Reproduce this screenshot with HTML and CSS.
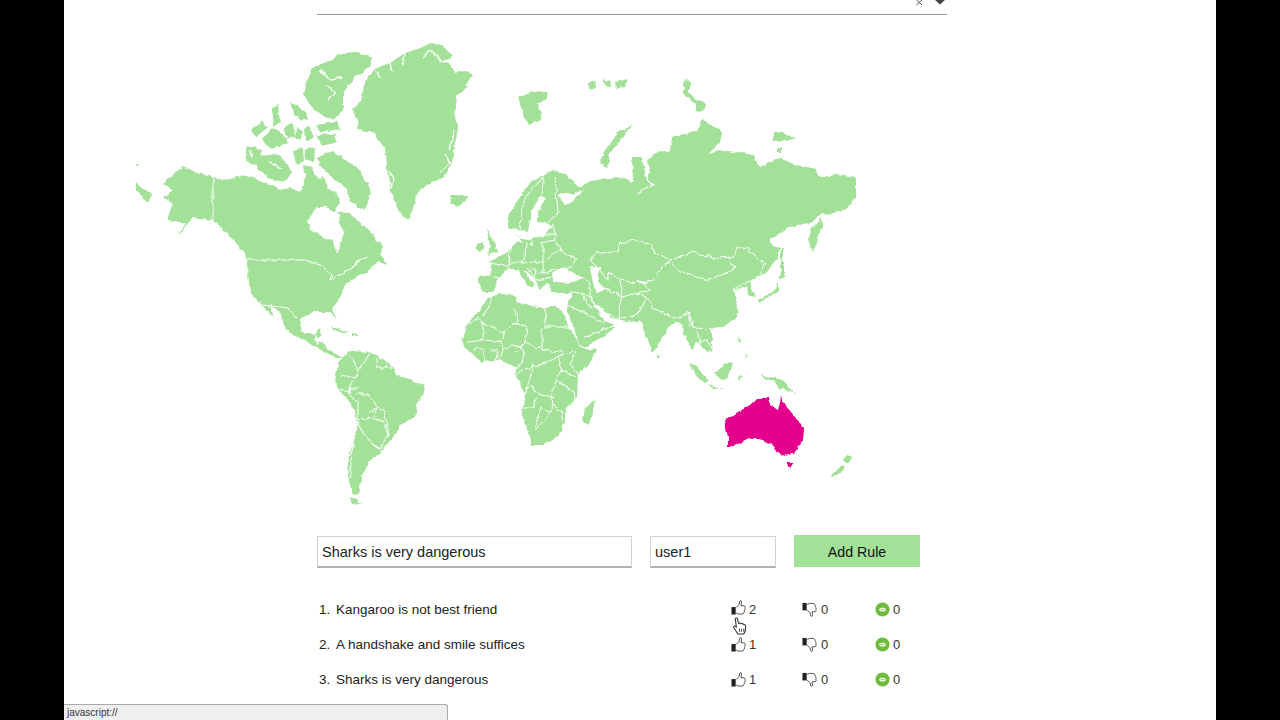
FILE: index.html
```html
<!DOCTYPE html>
<html lang="en">
<head>
<meta charset="utf-8">
<title>Rules</title>
<link rel="stylesheet" href="styles.css">
</head>
<body>
<div class="page">
  <div class="topbar">
    <svg class="topicons" viewBox="0 0 30 6" width="30" height="6" aria-hidden="true">
      <path class="x" d="M0.5 0 L6 5 M6 0 L0.5 5"/>
      <path class="diamond" d="M19 0 H29 L24 4.5 Z"/>
    </svg>
  </div>

  <svg class="map" viewBox="136 40 720 470" width="720" height="470" aria-label="World map">
    <defs>
      <filter id="rough" filterUnits="userSpaceOnUse" x="136" y="40" width="720" height="470" color-interpolation-filters="sRGB">
        <feTurbulence type="fractalNoise" baseFrequency="0.14" numOctaves="3" seed="7" result="n"/>
        <feDisplacementMap in="SourceGraphic" in2="n" scale="5" xChannelSelector="R" yChannelSelector="G"/>
        <feGaussianBlur stdDeviation="0.4"/>
      </filter>
    </defs>
    <g filter="url(#rough)">
    <g class="land">
      <!-- Greenland -->
      <polygon points="432,43 442,46 452,57 442,62 452,65 455,73 465,71 472,75 463,90 457,95 455,117 458,130 455,143 452,163 445,177 430,183 417,193 410,220 402,217 393,200 388,177 385,147 373,133 357,128 358,120 352,110 362,100 363,87 375,68 390,63 405,53 420,48"/>
      <!-- North America -->
      <polygon points="163,183 182,167 213,177 227,180 243,175 267,183 280,190 292,187 300,192 306,176 302,165 311,167 318,180 324,176 329,190 336,192 340,204 334,212 350,213 360,222 370,232 383,247 380,254 388,265 377,262 366,272 352,280 345,285 342,293 333,308 335,318 330,312 313,312 300,320 302,332 313,335 320,329 322,335 313,340 323,343 328,350 335,354 342,358 336,358 325,352 313,346 305,340 287,332 280,313 270,305 274,318 262,305 250,292 247,262 248,260 240,247 220,227 213,220 193,217 178,235 186,222 172,222 167,218 173,203 163,197 173,190"/>
      <!-- Arctic Canada -->
      <polygon points="342,53 357,52 373,58 370,67 357,75 343,93 343,110 333,120 323,115 313,110 303,93 308,78 313,68 330,60"/>
      <polygon points="248,145 262,150 257,165 245,162"/>
      <polygon points="258,156 280,154 292,173 284,182 267,178 257,167"/>
      <polygon points="317,158 333,150 347,161 360,171 371,193 364,211 350,202 346,187 333,179 322,168"/>
      <polygon points="252,130 262,120 267,128 256,137"/>
      <polygon points="262,140 272,128 284,136 290,143 270,148"/>
      <polygon points="272,118 276,110 282,122 274,126"/>
      <polygon points="289,102 297,104 306,118 296,116"/>
      <polygon points="300,108 306,112 308,120 300,120"/>
      <polygon points="316,125 337,121 340,129 320,132"/>
      <polygon points="316,135 335,134 337,142 322,146"/>
      <polygon points="294,150 303,148 304,161 297,165"/>
      <polygon points="306,149 315,147 314,163 305,160"/>
      <polygon points="304,128 311,127 313,139 305,141"/>
      <polygon points="284,127 293,124 295,136 287,138"/>
      <polygon points="272,107 278,105 279,112 272,114"/>
      <polygon points="296,128 302,130 301,140 295,138"/>
      <!-- Chukotka / Aleutian end -->
      <polygon points="136,182 143,190 153,193 148,202 136,192"/>
      <polygon points="136,165 139,165 139,167 136,167"/>
      <!-- Caribbean -->
      <polygon points="330,326 345,331 346,333 332,330"/>
      <polygon points="352,333 358,334 358,336 352,335"/>
      <!-- South America -->
      <polygon points="342,358 352,351 370,352 390,363 398,375 425,385 423,395 417,405 415,417 400,425 393,437 385,447 380,450 380,453 368,462 362,477 360,487 357,495 352,493 348,477 348,460 357,427 355,410 337,387 335,375"/>
      <polygon points="349,497 357,499 362,504 353,503"/>
      <!-- Africa -->
      <polygon points="488,298 502,293 515,295 517,302 537,307 560,307 570,330 582,348 597,350 588,365 578,375 577,397 567,408 565,423 558,437 543,445 533,445 528,433 522,410 525,395 515,373 515,367 500,360 482,362 468,352 463,343 465,327 477,313"/>
      <polygon points="595,399 593,413 588,425 583,422 585,408"/>
      <!-- Eurasia -->
      <polygon points="508,217 518,200 530,183 553,170 566,173 578,188 587,183 617,177 633,182 632,157 642,157 645,178 650,173 647,160 658,153 670,150 672,138 697,130 703,119 722,132 720,143 707,155 723,150 753,155 760,167 780,158 800,167 817,170 820,177 837,175 856,178 856,198 845,210 827,215 822,213 812,222 790,227 768,240 773,245 780,247 777,260 765,273 750,282 755,297 748,295 747,287 733,290 738,305 737,317 723,327 710,328 713,350 707,353 697,340 693,350 688,343 680,323 672,323 653,353 640,320 637,323 612,318 615,327 603,337 583,347 578,342 567,310 568,303 572,293 552,293 550,285 547,283 540,290 533,277 523,268 535,287 529,288 518,270 508,268 500,277 498,278 492,292 482,292 478,277 490,275 492,263 488,262 507,252 513,245 522,242 515,233 518,238 527,240 528,232 508,227"/>
      <!-- UK Ireland Iceland -->
      <polygon points="487,228 493,238 498,252 488,255 490,245"/>
      <polygon points="477,245 483,242 483,250 477,251"/>
      <polygon points="450,195 467,195 467,200 457,207 451,202"/>
      <!-- Arctic Eurasia -->
      <polygon points="518,97 533,92 548,92 547,98 537,105 543,118 528,125 522,110"/>
      <polygon points="588,84 596,81 595,88 589,90"/>
      <polygon points="604,80 612,81 611,87 605,86"/>
      <polygon points="615,82 627,79 625,85 616,88"/>
      <polygon points="633,125 617,133 605,150 600,163 608,168 610,153 620,140"/>
      <polygon points="685,78 690,83 688,92 697,100 705,103 705,110 697,113 695,104 683,93"/>
      <polygon points="772,133 783,133 797,140 785,140 773,142"/>
      <polygon points="778,148 782,148 782,152 778,152"/>
      <!-- Japan and Sakhalin -->
      <polygon points="822,218 822,228 813,252 808,240 810,230"/>
      <polygon points="781,248 783,248 783,265 785,277 778,280 781,268"/>
      <polygon points="778,283 778,292 768,298 758,303 758,300 773,292"/>
      <!-- South-East Asia -->
      <polygon points="657,355 659,355 660,359 657,359"/>
      <polygon points="688,363 695,365 708,380 705,383 697,377"/>
      <polygon points="708,385 723,389 713,389"/>
      <polygon points="730,362 733,363 728,378 720,380 715,372 725,365"/>
      <polygon points="737,377 742,375 738,382"/>
      <polygon points="738,337 740,343 737,343"/>
      <polygon points="745,355 748,356 745,360"/>
      <polygon points="760,375 770,377 783,380 795,393 783,388 780,390 775,382 767,380"/>
      <!-- New Zealand -->
      <polygon points="847,454 852,457 847,463 844,460"/>
      <polygon points="843,465 844,470 833,477 831,475"/>
    </g>

    <g class="water">
      <polygon points="307,222 317,207 327,207 340,215 343,237 337,253 332,240 312,232"/>
      <polygon points="527,240 543,237 553,224 538,222 540,207 547,197 540,196 531,212 528,232"/>
      <polygon points="558,193 572,194 582,190 574,201 566,205 562,200"/>
      <polygon points="552,273 563,267 573,273 582,278 573,283 553,282"/>
      <polygon points="590,267 600,267 597,277 603,290 597,293 593,283"/>
      <polygon points="593,305 605,322 617,325 610,315 598,305"/>
      <polygon points="530,243 534,240 532,246"/>
    </g>

    <g class="coast">
      <polyline points="442,62 430,50 424,58"/>
      <polyline points="405,53 403,66"/>
      <polyline points="390,63 392,72"/>
      <polyline points="375,68 380,78"/>
      <polyline points="388,170 394,178 391,188"/>
      <polyline points="445,155 450,163 440,172"/>
      <polyline points="455,130 449,150"/>
      <polyline points="320,70 330,80 342,78"/>
      <polyline points="325,85 335,92 328,100"/>
      <polyline points="637,193 648,188 653,185 647,180 648,167"/>
      <polyline points="345,272 358,262 370,256"/>
      <polyline points="250,150 252,158"/>
      <polyline points="270,162 282,170"/>
    </g>

    <g class="border">
      <polyline points="213,177 213,220"/>
      <polyline points="248,260 305,260 320,265 332,275 330,280 345,272"/>
      <polyline points="262,305 280,307 288,308 297,318"/>
      <polyline points="315,335 318,345"/>
      <polyline points="345,353 352,358 358,370 356,378 340,375"/>
      <polyline points="370,352 362,365 358,372"/>
      <polyline points="378,358 376,368 392,368"/>
      <polyline points="386,368 388,360"/>
      <polyline points="338,390 350,392 348,388 358,388"/>
      <polyline points="358,372 350,385 348,392 358,402 358,412 358,420 358,427"/>
      <polyline points="356,394 368,394 378,408 384,412 388,425 388,435"/>
      <polyline points="370,412 378,408 372,418 384,422 388,435 380,448 372,444 362,430 358,420 370,418"/>
      <polyline points="372,444 380,450"/>
      <polyline points="350,478 352,450 358,420"/>
      <polyline points="483,317 492,298"/>
      <polyline points="465,327 478,318 483,322 503,333 515,323 527,327"/>
      <polyline points="515,307 517,322"/>
      <polyline points="545,307 545,327 570,327"/>
      <polyline points="527,327 525,342 515,352"/>
      <polyline points="542,328 542,350 563,352"/>
      <polyline points="467,342 483,340 483,322"/>
      <polyline points="483,340 502,342 503,333"/>
      <polyline points="502,342 503,350 500,360"/>
      <polyline points="525,342 537,348 542,345"/>
      <polyline points="473,352 478,347 484,352 484,362"/>
      <polyline points="490,350 498,350 496,361"/>
      <polyline points="503,350 512,345 525,350 522,363 515,368"/>
      <polyline points="515,373 530,368 545,363 560,355 572,352"/>
      <polyline points="533,365 530,378 525,395"/>
      <polyline points="558,355 562,370 556,380 552,395"/>
      <polyline points="575,352 570,364 578,374"/>
      <polyline points="562,370 578,378"/>
      <polyline points="556,380 574,392 575,400"/>
      <polyline points="525,388 532,386 538,395 555,397"/>
      <polyline points="536,398 534,408 520,408"/>
      <polyline points="541,405 535,428"/>
      <polyline points="552,398 553,405 547,418 536,430"/>
      <polyline points="553,405 562,412 562,422"/>
      <polyline points="539,408 553,412"/>
      <polyline points="555,177 558,213 547,223"/>
      <polyline points="543,177 542,200"/>
      <polyline points="543,177 523,200 520,230"/>
      <polyline points="553,223 555,240 560,250 577,260 572,268 555,270"/>
      <polyline points="510,250 508,267"/>
      <polyline points="526,243 525,257 522,262"/>
      <polyline points="543,243 543,262 543,273 555,270"/>
      <polyline points="510,263 543,262 560,250"/>
      <polyline points="543,235 558,235"/>
      <polyline points="540,243 555,240"/>
      <polyline points="527,268 537,280 552,277"/>
      <polyline points="530,268 543,273"/>
      <polyline points="536,268 535,280"/>
      <polyline points="490,275 498,278"/>
      <polyline points="492,263 508,267"/>
      <polyline points="590,260 597,253 617,252 620,243 635,240 648,243 657,253 670,260 657,273 653,280 637,283 620,280 608,272 608,280 597,267 590,260"/>
      <polyline points="670,260 693,252 713,258 733,257 737,248 747,247 755,257 765,263 760,275 752,280"/>
      <polyline points="670,260 680,272 707,280 727,273 735,267 730,260"/>
      <polyline points="580,277 590,282 590,297 600,312 620,318 618,308 622,297 610,290 597,289"/>
      <polyline points="622,297 637,293 647,297 640,310 633,317 620,318"/>
      <polyline points="647,297 653,308 672,317 680,317 690,312 690,327"/>
      <polyline points="690,312 693,327 707,330"/>
      <polyline points="697,330 700,343 707,340 713,350"/>
      <polyline points="637,283 645,284 650,290 637,293"/>
      <polyline points="620,280 622,297"/>
      <polyline points="653,280 640,283"/>
      <polyline points="570,292 580,293 590,297"/>
      <polyline points="567,305 583,312 603,323"/>
      <polyline points="580,293 592,308"/>
      <polyline points="582,338 615,325"/>
      <polyline points="733,290 742,284 750,282"/>
    </g>

    <g class="oz">
      <polygon points="724,420 735,415 745,408 753,403 758,398 768,398 770,405 778,410 781,397 787,407 795,417 803,428 802,442 795,453 785,456 777,453 772,443 768,445 763,440 752,438 738,445 728,447 728,437"/>
      <polygon points="786,463 794,463 790,469"/>
    </g>
    </g>
  </svg>

  <form class="ruleform">
    <input class="field field-rule" type="text" value="Sharks is very dangerous">
    <input class="field field-user" type="text" value="user1">
    <button class="addbtn" type="button">Add Rule</button>
  </form>

  <ol class="rules">
    <li class="rule">
      <span class="num">1.</span><span class="ruletext">Kangaroo is not best friend</span>
      <span class="vote vote-up vote-active"><svg class="ico"><use href="#up"/></svg><span class="count">2</span></span>
      <span class="vote vote-down"><svg class="ico"><use href="#down"/></svg><span class="count">0</span></span>
      <span class="vote"><svg class="ico"><use href="#chat"/></svg><span class="count">0</span></span>
    </li>
    <li class="rule">
      <span class="num">2.</span><span class="ruletext">A handshake and smile suffices</span>
      <span class="vote vote-up"><svg class="ico"><use href="#up"/></svg><span class="count">1</span></span>
      <span class="vote vote-down"><svg class="ico"><use href="#down"/></svg><span class="count">0</span></span>
      <span class="vote"><svg class="ico"><use href="#chat"/></svg><span class="count">0</span></span>
    </li>
    <li class="rule">
      <span class="num">3.</span><span class="ruletext">Sharks is very dangerous</span>
      <span class="vote vote-up"><svg class="ico"><use href="#up"/></svg><span class="count">1</span></span>
      <span class="vote vote-down"><svg class="ico"><use href="#down"/></svg><span class="count">0</span></span>
      <span class="vote"><svg class="ico"><use href="#chat"/></svg><span class="count">0</span></span>
    </li>
  </ol>

  <svg class="cursor" viewBox="0 0 14 17" width="15" height="18" aria-hidden="true">
    <path d="M3 1.5 C4 0.5 5 1 5.2 2 L6 6 C7 5.6 8 5.8 8.5 6.3 C9.5 6 10.3 6.3 10.7 7 C11.8 6.9 12.8 7.6 12.8 9 L12.5 13 L11 16 H5.5 L1.5 10 C1 9 2.2 8 3.2 8.8 L4 9.5 Z" fill="#fff" stroke="#333" stroke-width="1"/>
    <path d="M7 11 V14 M9 11 V14 M11 11 V14" stroke="#333" stroke-width="0.8"/>
  </svg>

  <div class="status">javascript://</div>

  <svg class="defs" width="0" height="0" aria-hidden="true">
    <symbol id="up" viewBox="0 0 16 16">
      <rect x="0.5" y="7.5" width="4.5" height="8" fill="#222"/>
      <path d="M5.5 8 L8.5 5 L9.5 1 C10.5 0.3 11.5 1 11.3 2.5 L10.7 6 L14 6.2 C15.3 6.4 15.3 8 14.7 8.6 C15.4 9.3 15.2 10.6 14.4 11 C14.8 11.8 14.4 12.8 13.6 13 C13.8 14 13.2 15 12 15 H8 L5.5 14" fill="#fff" stroke="#333" stroke-width="0.9"/>
    </symbol>
    <symbol id="down" viewBox="0 0 16 16">
      <rect x="0.5" y="1" width="4.5" height="8" fill="#222"/>
      <path d="M5.5 8.5 L8.5 11.5 L9.5 15 C10.5 15.7 11.5 15 11.3 13.5 L10.7 10.5 L14 10.3 C15.3 10.1 15.3 8.5 14.7 7.9 C15.4 7.2 15.2 5.9 14.4 5.5 C14.8 4.7 14.4 3.7 13.6 3.5 C13.8 2.5 13.2 1.5 12 1.5 H8 L5.5 2.5" fill="#fff" stroke="#333" stroke-width="0.9"/>
    </symbol>
    <symbol id="chat" viewBox="0 0 16 16">
      <circle cx="8" cy="8" r="7.5" fill="#6fbb3c"/>
      <rect x="4.5" y="6" width="7" height="4" rx="2" fill="#fff" opacity="0.9"/>
      <circle cx="6.5" cy="8" r="0.6" fill="#6fbb3c"/>
      <circle cx="8" cy="8" r="0.6" fill="#6fbb3c"/>
      <circle cx="9.5" cy="8" r="0.6" fill="#6fbb3c"/>
    </symbol>
  </svg>
</div>
</body>
</html>
```

FILE: styles.css
```css
* { box-sizing: border-box; }

html, body {
  margin: 0;
  height: 100%;
  background: #000;
  overflow: hidden;
}

.page {
  position: relative;
  width: 1152px;
  height: 720px;
  margin: 0 auto;
  background: #fff;
  overflow: hidden;
  display: flex;
  flex-direction: column;
  font-family: "Liberation Sans", Arial, sans-serif;
  color: #222;
}

.topbar {
  width: 630px;
  height: 15px;
  margin-left: 253px;
  border-bottom: 1px solid #999;
  display: flex;
  justify-content: flex-end;
  align-items: flex-start;
  padding-right: 1px;
  flex: none;
}

.topicons { display: block; }
.topicons .x { stroke: #555; stroke-width: 1; fill: none; }
.topicons .diamond { fill: #444; }

.map {
  display: block;
  flex: none;
  margin: 25px 0 0 72px;
}

.land polygon { fill: #a3e199; }
.water polygon { fill: #fff; }
.coast polyline { fill: none; stroke: #fff; stroke-width: 1.3; }
.border polyline { fill: none; stroke: #fff; stroke-width: 1; }
.oz polygon { fill: #e4008c; }

.ruleform {
  display: flex;
  align-items: center;
  flex: none;
  margin: 25px 0 0 253px;
  height: 32px;
}

.field {
  height: 32px;
  margin-top: 1px;
  border: 1px solid #d4d4d4;
  border-bottom: 2px solid #b0b0b0;
  border-radius: 0;
  padding: 1px 4px 0;
  font: 14.5px "Liberation Sans", Arial, sans-serif;
  color: #222;
  background: #fff;
  outline: none;
}

.field-rule { width: 315px; margin-right: 18px; }
.field-user { width: 126px; margin-right: 18px; }

.addbtn {
  width: 126px;
  height: 32px;
  border: 0;
  padding: 1px 0 0;
  background: #a3e199;
  color: #111;
  font: 14.2px "Liberation Sans", Arial, sans-serif;
}

.rules {
  list-style: none;
  margin: 25px 0 0 255px;
  padding: 0;
  flex: none;
}

.rule {
  display: flex;
  align-items: center;
  height: 35px;
  font-size: 13.5px;
  color: #222;
}

.num { width: 17px; }
.ruletext { width: 395px; }

.vote {
  display: flex;
  align-items: center;
  width: 72px;
  font-size: 13px;
}

.vote-up { width: 71px; }
.vote-down { width: 73px; }

.ico { width: 15px; height: 15px; margin-right: 3px; flex: none; }
.vote-down .ico { margin-right: 4px; }
.vote-active .ico { margin-top: -5px; }
.count { line-height: 1; color: #333; }

.cursor {
  position: absolute;
  left: 668px;
  top: 617px;
}

.status {
  position: absolute;
  left: 0;
  bottom: 0;
  width: 384px;
  height: 16px;
  background: #efefef;
  border: 1px solid #aaa;
  border-left: 0;
  border-bottom: 0;
  border-radius: 0 3px 0 0;
  padding: 1px 0 0 3px;
  font-size: 10px;
  line-height: 13px;
  color: #333;
}

.defs { position: absolute; }
```
